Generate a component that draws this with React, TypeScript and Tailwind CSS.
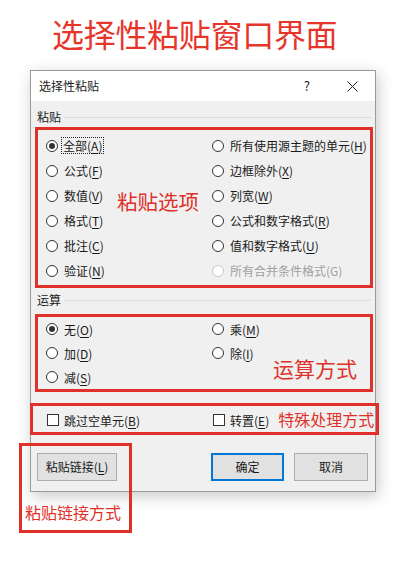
import type { ReactNode } from 'react'

const RED = 'border-[#e0302a]'

type Opt = { label: string; key: string; checked?: boolean; disabled?: boolean; focus?: boolean }

// 带下划线快捷键的选项文字
function Label({ label, k, disabled }: { label: string; k: string; disabled?: boolean }) {
  return (
    <span className={disabled ? 'text-[#a0a0a0]' : 'text-[#1a1a1a]'}>
      {label}(
      {disabled ? k : <span className="underline underline-offset-2">{k}</span>})
    </span>
  )
}

function Radio({ opt }: { opt: Opt }) {
  return (
    <div className="flex h-full items-center">
      <span
        className={`flex h-[12px] w-[12px] shrink-0 items-center justify-center rounded-full border bg-white ${
          opt.disabled ? 'border-[#c8c8c8]' : 'border-[#333]'
        }`}
      >
        {opt.checked && <span className="h-[6px] w-[6px] rounded-full bg-[#333]" />}
      </span>
      <span className={`ml-[4px] px-[1px] leading-[15px] ${opt.focus ? 'outline outline-1 outline-dotted outline-[#222]' : 'border border-transparent'}`}>
        <Label label={opt.label} k={opt.key} disabled={opt.disabled} />
      </span>
    </div>
  )
}

function Check({ label, k }: { label: string; k: string }) {
  return (
    <div className="flex items-center">
      <span className="h-[12px] w-[12px] shrink-0 border border-[#333] bg-white" />
      <span className="ml-[5px] leading-[15px]">
        <Label label={label} k={k} />
      </span>
    </div>
  )
}

function GroupTitle({ children }: { children: ReactNode }) {
  return (
    <div className="flex h-[16px] items-center pl-[6px] pr-[4px]">
      <span className="leading-[16px]">{children}</span>
      <span className="ml-[3px] h-px flex-1 bg-[#dcdcdc]" />
    </div>
  )
}

const pasteOpts: Opt[] = [
  { label: '全部', key: 'A', checked: true, focus: true },
  { label: '所有使用源主题的单元', key: 'H' },
  { label: '公式', key: 'F' },
  { label: '边框除外', key: 'X' },
  { label: '数值', key: 'V' },
  { label: '列宽', key: 'W' },
  { label: '格式', key: 'T' },
  { label: '公式和数字格式', key: 'R' },
  { label: '批注', key: 'C' },
  { label: '值和数字格式', key: 'U' },
  { label: '验证', key: 'N' },
  { label: '所有合并条件格式', key: 'G', disabled: true },
]

const opOpts: Opt[] = [
  { label: '无', key: 'O', checked: true },
  { label: '乘', key: 'M' },
  { label: '加', key: 'D' },
  { label: '除', key: 'I' },
  { label: '减', key: 'S' },
]

export default function App() {
  return (
    <div
      className="relative h-[579px] w-[408px] overflow-hidden bg-white text-[12px] text-[#1a1a1a]"
      style={{ fontFamily: '"Noto Sans CJK SC", "Noto Sans", sans-serif' }}
    >
      {/* 标题 */}
      <div className="h-[70px] pl-[52px] pt-[13px]">
        <h1 className="text-[32px] leading-[40px] tracking-[-0.3px] text-[#e6362c]">选择性粘贴窗口界面</h1>
      </div>

      {/* 对话框 */}
      <div className="relative ml-[30px] w-[346px] border border-[#9a9a9a] bg-[#f0f0f0] shadow-[2px_4px_14px_rgba(0,0,0,0.22)]">
        <div className="flex h-[30px] items-center bg-white pl-[8px]">
          <span className="text-[12px]">选择性粘贴</span>
          <span className="ml-auto text-[13px]">?</span>
          <svg className="ml-[37px] mr-[17px]" width="11" height="11" viewBox="0 0 11 11">
            <path d="M0.5 0.5L10.5 10.5M10.5 0.5L0.5 10.5" stroke="#222" strokeWidth="1" />
          </svg>
        </div>

        <div className="pt-[8px]">
          <GroupTitle>粘贴</GroupTitle>
          <div className={`relative ml-[4px] mr-[2px] mt-[2px] h-[161px] border-[3px] ${RED} pl-[8px] pt-[3px]`}>
            <div className="grid grid-cols-[166px_1fr] auto-rows-[25px]">
              {pasteOpts.map((o) => (
                <Radio key={o.key} opt={o} />
              ))}
            </div>
            <span className="absolute left-[79px] top-[58px] text-[20.5px] leading-[26px] text-[#e0302a]">粘贴选项</span>
          </div>

          <div className="mt-[4px]">
            <GroupTitle>运算</GroupTitle>
          </div>
          <div className={`relative ml-[4px] mr-[2px] mt-[6px] h-[78px] border-[3px] ${RED} pl-[8px]`}>
            <div className="grid grid-cols-[166px_1fr] auto-rows-[24px]">
              {opOpts.map((o) => (
                <Radio key={o.key} opt={o} />
              ))}
            </div>
            <span className="absolute left-[235px] top-[38px] text-[21px] leading-[26px] text-[#e0302a]">运算方式</span>
          </div>

          <div className={`-ml-[1px] -mr-[4px] mt-[11px] flex h-[32px] items-center border-[3px] ${RED} pl-[14px] pt-[2px]`}>
            <div className="w-[166px]">
              <Check label="跳过空单元" k="B" />
            </div>
            <Check label="转置" k="E" />
            <span className="-mt-[3px] ml-[9px] text-[16px] leading-[20px] text-[#e0302a]">特殊处理方式</span>
          </div>

          <div className="mt-[18px] flex h-[28px] pb-0 pl-[6px] pr-[7px]">
            <button className="h-[28px] w-[80px] border border-[#adadad] bg-[#e1e1e1] text-[12px]">
              粘贴链接(<span className="underline underline-offset-2">L</span>)
            </button>
            <button className="ml-auto h-[28px] w-[73px] border-2 border-[#0078d7] bg-[#e1e1e1] text-[12px]">确定</button>
            <button className="ml-[10px] h-[28px] w-[74px] border border-[#adadad] bg-[#e1e1e1] text-[12px]">取消</button>
          </div>
          <div className="h-[10px]" />
        </div>
      </div>

      {/* 粘贴链接方式 标注 */}
      <div className={`absolute left-[19px] top-[443px] h-[90px] w-[113px] border-[3px] ${RED}`}>
        <span className="absolute left-[3px] top-[56px] whitespace-nowrap text-[16px] leading-[20px] text-[#e0302a]">粘贴链接方式</span>
      </div>
    </div>
  )
}
